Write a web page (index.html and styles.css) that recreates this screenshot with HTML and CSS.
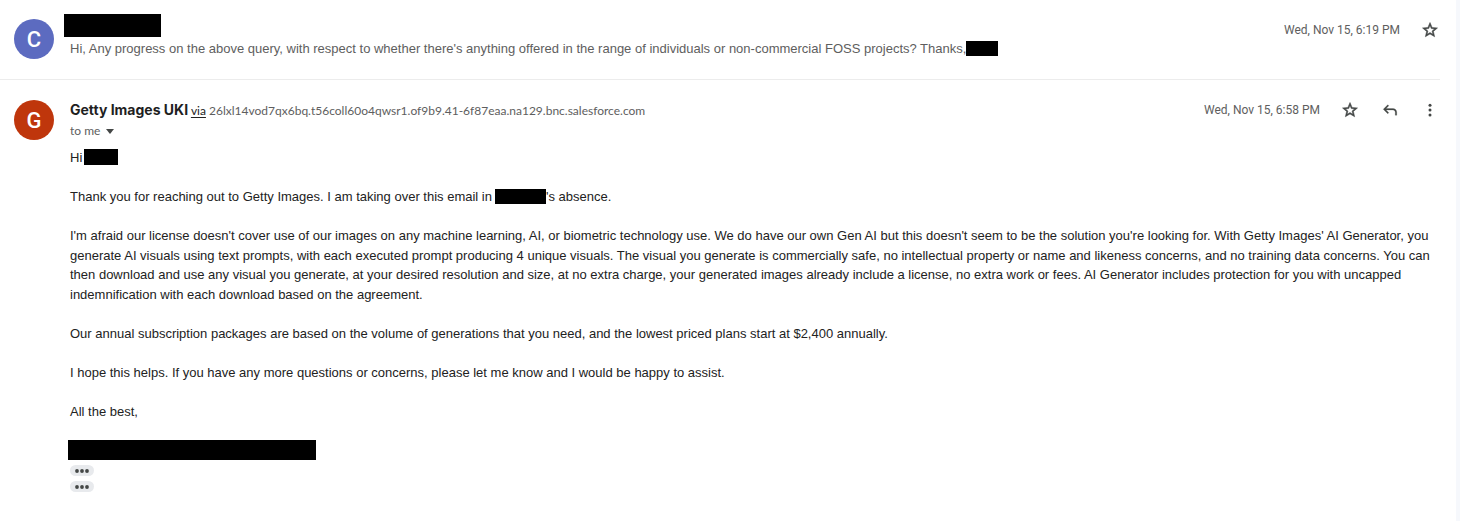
FILE: index.html
```html
<!DOCTYPE html>
<html lang="en">
<head>
<meta charset="utf-8">
<meta name="viewport" content="width=device-width, initial-scale=1">
<title>Conversation</title>
<link rel="stylesheet" href="styles.css">
</head>
<body>
<svg class="sprite" aria-hidden="true">
  <symbol id="star" viewBox="0 0 24 24"><path stroke="#444746" stroke-width=".7" d="M22 9.24l-7.19-.62L12 2 9.19 8.63 2 9.24l5.46 4.73L5.82 21 12 17.27 18.18 21l-1.63-7.03L22 9.24zM12 15.4l-3.76 2.27 1-4.28-3.32-2.88 4.38-.38L12 6.1l1.71 4.04 4.38.38-3.32 2.88 1 4.28L12 15.4z"/></symbol>
  <symbol id="reply" viewBox="0 0 24 24"><path stroke="#444746" stroke-width=".3" d="M19 19v-4q0-1.250-.875-2.125T16 12H6.800l3.600 3.600L9 17l-6-6 6-6 1.400 1.400L6.800 10H16q2.075 0 3.538 1.463T21 15v4h-2z"/></symbol>
  <symbol id="more" viewBox="0 0 24 24"><circle cx="12" cy="5.500" r="2"/><circle cx="12" cy="12" r="2"/><circle cx="12" cy="18.500" r="2"/></symbol>
  <symbol id="dots" viewBox="0 0 24 11"><circle cx="7" cy="6" r="1.900"/><circle cx="12" cy="6" r="1.900"/><circle cx="17" cy="6" r="1.900"/></symbol>
</svg>
<main class="thread">
  <article class="message collapsed">
    <div class="avatar avatar-blue">C</div>
    <div class="content">
      <div class="redacted redacted-sender"></div>
      <p class="snippet">Hi, Any progress on the above query, with respect to whether there's anything offered in the range of individuals or non-commercial FOSS projects? Thanks,<span class="redacted redacted-sign"></span></p>
    </div>
    <div class="meta">
      <time>Wed, Nov 15, 6:19 PM</time>
      <button class="icon" aria-label="Star"><svg><use href="#star"/></svg></button>
    </div>
  </article>
  <article class="message expanded">
    <div class="avatar avatar-red">G</div>
    <div class="content">
      <header class="head">
        <div class="from"><h2>Getty Images UKI</h2> <a href="#via">via</a> <span>26lxl14vod7qx6bq.t56coll60o4qwsr1.of9b9.41-6f87eaa.na129.bnc.salesforce.com</span></div>
        <div class="meta">
          <time>Wed, Nov 15, 6:58 PM</time>
          <button class="icon" aria-label="Star"><svg><use href="#star"/></svg></button>
          <button class="icon" aria-label="Reply"><svg><use href="#reply"/></svg></button>
          <button class="icon" aria-label="More"><svg><use href="#more"/></svg></button>
        </div>
      </header>
      <button class="recipients">to me <svg class="caret" viewBox="0 0 8 5"><path d="M0 0h8L4 5z"/></svg></button>
      <div class="body">
        <p>Hi <span class="redacted redacted-name"></span></p>
        <p>Thank you for reaching out to Getty Images. I am taking over this email in<span class="redacted redacted-agent"></span>'s absence.</p>
        <p>I'm afraid our license doesn't cover use of our images on any machine learning, AI, or biometric technology use. We do have our own Gen AI but this doesn't seem to be the solution you're looking for. With Getty Images' AI Generator, you generate AI visuals using text prompts, with each executed prompt producing 4 unique visuals. The visual you generate is commercially safe, no intellectual property or name and likeness concerns, and no training data concerns. You can then download and use any visual you generate, at your desired resolution and size, at no extra charge, your generated images already include a license, no extra work or fees. AI Generator includes protection for you with uncapped indemnification with each download based on the agreement.</p>
        <p>Our annual subscription packages are based on the volume of generations that you need, and the lowest priced plans start at $2,400 annually.</p>
        <p>I hope this helps. If you have any more questions or concerns, please let me know and I would be happy to assist.</p>
        <p>All the best,</p>
      </div>
      <div class="redacted redacted-signature"></div>
      <button class="trim" aria-label="Show trimmed content"><svg><use href="#dots"/></svg></button>
      <button class="trim" aria-label="Show signature"><svg><use href="#dots"/></svg></button>
    </div>
  </article>
</main>
</body>
</html>
```
FILE: styles.css
```css
* { box-sizing: border-box; }
body {
  margin: 0;
  min-height: 100vh;
  padding-right: 4px;
  background: #f6f8fc;
  font-family: "Liberation Sans", Arial, sans-serif;
  font-size: 13px;
  color: #222;
}
.sprite { display: none; }
.thread { min-height: 100vh; background: #fff; padding-right: 16px; }
p, h2 { margin: 0; }
button { border: 0; padding: 0; background: none; font: inherit; color: inherit; cursor: pointer; }
.message { display: flex; gap: 16px; padding-left: 14px; }
.collapsed { height: 80px; border-bottom: 1px solid #ececec; padding-top: 14px; }
.expanded { padding-top: 20px; }
.avatar {
  flex: none;
  width: 40px;
  height: 40px;
  border-radius: 50%;
  color: #fff;
  font: 500 22px/42px Roboto, sans-serif;
  text-align: center;
}
.avatar-blue { background: #5c6bc0; }
.avatar-red { background: #bf360c; }
.collapsed .avatar { margin-top: 5px; }
.content { flex: 1; min-width: 0; }
.redacted { display: inline-block; background: #000; vertical-align: -3px; height: 15px; }
.redacted-sender { display: block; width: 97px; height: 23px; margin-left: -6px; }
.snippet { color: #5e5e5e; line-height: 24px; white-space: nowrap; }
.redacted-sign { width: 32px; }
.redacted-name { width: 34px; height: 16px; margin-left: -2px; }
.redacted-agent { width: 51px; margin-left: 3px; }
.redacted-signature { display: block; width: 248px; height: 20px; margin: 19px 0 5px -2px; }
.meta { flex: none; display: flex; align-items: center; gap: 20px; height: 20px; color: #5e5e5e; font: 12px/20px Roboto, sans-serif; }
.collapsed .meta { margin-top: 6px; }
.icon { width: 20px; height: 20px; }
.icon svg { display: block; width: 18px; height: 18px; margin: auto; fill: #444746; }
.head { display: flex; justify-content: space-between; height: 20px; }
.from { font: 12px/20px Lato, sans-serif; color: #5e5e5e; white-space: nowrap; }
.from h2 { display: inline; font: 700 14px/20px Inter, sans-serif; color: #1f1f1f; }
.from a { color: #222; text-underline-offset: 2px; }
.recipients { display: flex; align-items: center; gap: 6px; color: #5e5e5e; font: 12px/22px Lato, sans-serif; }
.caret { width: 8px; height: 5px; fill: #444746; }
.body { display: grid; gap: 1.5em; margin-top: 6px; line-height: 1.5; }
.trim { display: block; width: 24px; height: 11px; margin-bottom: 5px; border-radius: 6px; background: #e8eaed; }
.trim svg { display: block; width: 24px; height: 11px; fill: #444746; }
```
